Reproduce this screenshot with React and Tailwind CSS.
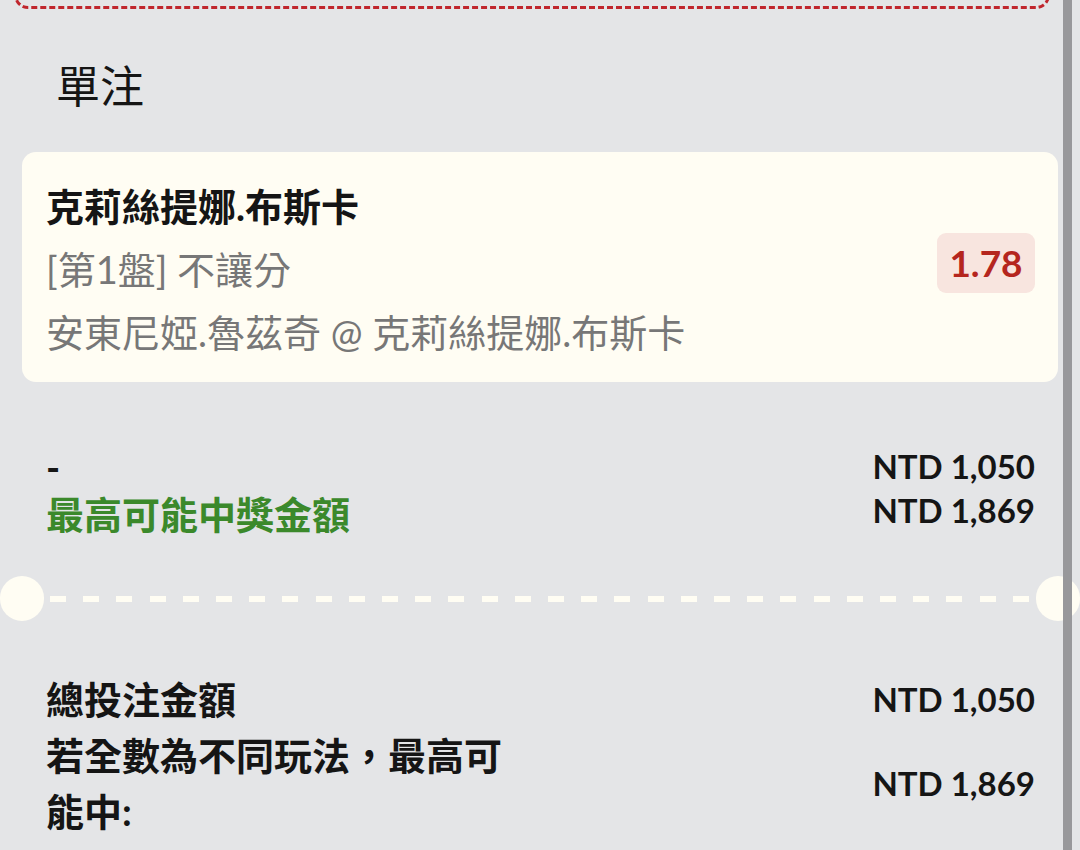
export default function App() {
  return (
    <div
      className="relative w-[1080px] h-[850px] overflow-hidden bg-[#e4e5e7] text-[#151515]"
      style={{ fontFamily: 'Lato, "Noto Sans CJK TC", sans-serif' }}
    >
      {/* bottom of the previous dashed box */}
      <div className="h-[40px] -mt-[31px] ml-[14px] mr-[30px] border-[3px] border-dashed border-[#c0262d] rounded-b-[14px]"></div>

      {/* title */}
      <div className="mt-[46px] pl-[56px] text-[44px] leading-[62px]">單注</div>

      {/* selection card */}
      <div className="mt-[35px] mx-[22px] h-[230px] rounded-[14px] bg-[#fffdf3] pl-6 pr-[23px] flex items-center justify-between">
        <div className="text-[38px] leading-[63px] pt-[4px]">
          <div className="font-bold">克莉絲提娜.布斯卡</div>
          <div className="text-[#777777]">[第1盤] 不讓分</div>
          <div className="text-[#777777]">安東尼婭.魯茲奇 @ 克莉絲提娜.布斯卡</div>
        </div>
        <div className="w-[98px] h-[60px] mb-[8px] rounded-[9px] bg-[#f8e5df] flex items-center justify-center text-[37px] font-bold text-[#b5261e]">
          1.78
        </div>
      </div>

      {/* stake / payout */}
      <div className="mt-[62px] pl-[46px] pr-[45px] flex justify-between">
        <div className="text-[38px] leading-[47px] font-bold">
          <div>-</div>
          <div className="text-[#3b892b]">最高可能中獎金額</div>
        </div>
        <div className="text-[33px] leading-[44px] font-bold text-right">
          <div>NTD 1,050</div>
          <div>NTD 1,869</div>
        </div>
      </div>

      {/* ticket divider */}
      <div className="mt-[38px] flex items-center">
        <div className="w-[44px] h-[45px] rounded-full bg-[#fffdf3] shrink-0"></div>
        <div className="flex-1 ml-[6px] mr-[6px] h-[6px] bg-[repeating-linear-gradient(90deg,#fffdf3_0_16px,transparent_16px_33.2px)]"></div>
        <div className="w-[44px] h-[45px] rounded-full bg-[#fffdf3] shrink-0"></div>
      </div>

      {/* totals */}
      <div className="mt-[50px] pl-[46px] pr-[45px] text-[38px] leading-[56px] font-bold">
        <div className="flex justify-between items-center">
          <div>總投注金額</div>
          <div className="text-[33px]">NTD 1,050</div>
        </div>
        <div className="flex justify-between items-center">
          <div className="w-[475px]">若全數為不同玩法，最高可能中:</div>
          <div className="text-[33px]">NTD 1,869</div>
        </div>
      </div>

      {/* scrollbar */}
      <div className="absolute top-0 bottom-0 left-[1063px] w-[9px] bg-[#98989b]"></div>
    </div>
  );
}
